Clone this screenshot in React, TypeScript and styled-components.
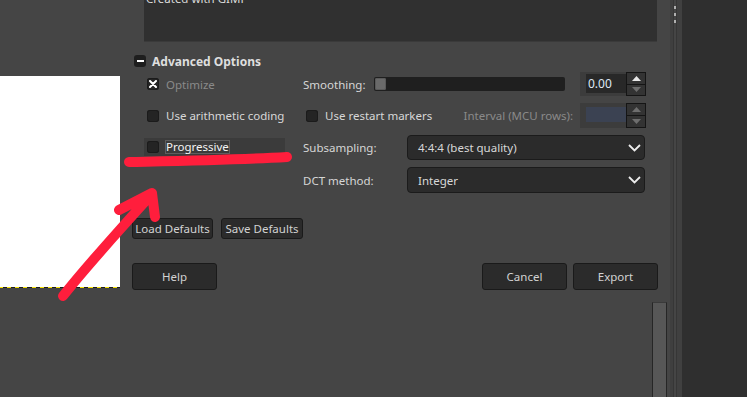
import React from 'react'
import styled, { createGlobalStyle } from 'styled-components'

const GlobalStyle = createGlobalStyle`
  html, body {
    margin: 0;
    padding: 0;
    background: #454545;
    overflow: hidden;
  }
  body {
    font-family: "Noto Sans", "Open Sans", sans-serif;
    font-size: 11.5px;
    color: #d6d6d6;
  }
`

function Check({ checked }: { checked?: boolean }) {
  return (
    <CheckBox>
      {checked && (
        <svg width="8" height="8" viewBox="0 0 8 8">
          <path d="M1 1 L7 7 M7 1 L1 7" stroke="#fff" strokeWidth="2" strokeLinecap="round" />
        </svg>
      )}
    </CheckBox>
  )
}

function Arrow({ up, dim }: { up?: boolean; dim?: boolean }) {
  return (
    <svg width="9" height="5" viewBox="0 0 9 5">
      <path d={up ? 'M0 5 L4.5 0 L9 5 Z' : 'M0 0 L4.5 5 L9 0 Z'} fill={dim ? '#6e6e6e' : '#e8e8e8'} />
    </svg>
  )
}

function Chevron() {
  return (
    <svg width="13" height="8" viewBox="0 0 13 8">
      <path d="M1 1 L6.5 6.5 L12 1" stroke="#ececec" strokeWidth="1.8" fill="none" />
    </svg>
  )
}

function Spin({ value, disabled, height }: { value?: string; disabled?: boolean; height: number }) {
  return (
    <SpinBox style={{ height }}>
      <SpinEntry $disabled={disabled}>{value}</SpinEntry>
      <SpinButtons>
        <SpinBtn>
          <Arrow up dim={disabled} />
        </SpinBtn>
        <SpinBtn>
          <Arrow dim />
        </SpinBtn>
      </SpinButtons>
    </SpinBox>
  )
}

export default function App() {
  return (
    <>
      <GlobalStyle />
      <Screen>
        <CanvasColumn>
          <Canvas />
        </CanvasColumn>

        <Dialog>
          <Comment>
            <CommentText>Created with GIMP</CommentText>
          </Comment>

          <Expander>
            <ExpanderBox>
              <span />
            </ExpanderBox>
            Advanced Options
          </Expander>

          <Options>
            <CheckItem $dim>
              <Check checked />
              Optimize
            </CheckItem>
            <RightRow>
              <Label>Smoothing:</Label>
              <Slider>
                <Handle />
              </Slider>
              <Spin value="0.00" height={24} />
            </RightRow>

            <CheckItem>
              <Check />
              Use arithmetic coding
            </CheckItem>
            <RightRow>
              <CheckItem>
                <Check />
                Use restart markers
              </CheckItem>
              <Spacer />
              <Label $dim>Interval (MCU rows):</Label>
              <Spin disabled height={25} />
            </RightRow>

            <CheckItem $focused>
              <Check />
              <FocusText>Progressive</FocusText>
            </CheckItem>
            <RightRow>
              <ComboLabel>Subsampling:</ComboLabel>
              <Combo>
                4:4:4 (best quality)
                <Chevron />
              </Combo>
            </RightRow>

            <span />
            <RightRow>
              <ComboLabel>DCT method:</ComboLabel>
              <Combo>
                Integer
                <Chevron />
              </Combo>
            </RightRow>
          </Options>

          <DefaultsRow>
            <Button $w={81} $h={21}>Load Defaults</Button>
            <Button $w={82} $h={21}>Save Defaults</Button>
          </DefaultsRow>

          <ActionRow>
            <Button $w={85} $h={27}>Help</Button>
            <Spacer />
            <Button $w={85} $h={27}>Cancel</Button>
            <Button $w={85} $h={27}>Export</Button>
          </ActionRow>

          <ScrollTrack />
        </Dialog>

        <Divider>
          <Grip />
          <Grip />
          <Grip />
        </Divider>
        <SidePanel />

        <Marks width="747" height="397" viewBox="0 0 747 397">
          <path
            d="M129 162 C 175 161, 235 160, 287 157"
            stroke="#ff1e3c"
            strokeWidth="10"
            strokeLinecap="round"
            fill="none"
          />
          <path
            d="M63 296 C 85 268, 112 238, 152 194 M119 210 L 152 193 L 155 217"
            stroke="#ff1e3c"
            strokeWidth="10"
            strokeLinecap="round"
            strokeLinejoin="round"
            fill="none"
          />
        </Marks>
      </Screen>
    </>
  )
}

const Screen = styled.div`
  position: relative;
  display: flex;
  width: 747px;
  height: 397px;
  overflow: hidden;
`

const CanvasColumn = styled.div`
  width: 120px;
  padding-top: 76px;
  flex-shrink: 0;
`

const Canvas = styled.div`
  height: 211px;
  background: #fff;
  border-bottom: 1px solid transparent;
  border-image: repeating-linear-gradient(90deg, #f5e100 0 4px, #1c1c1c 4px 8px) 1;
`

const Dialog = styled.div`
  width: 550px;
  flex-shrink: 0;
  display: flex;
  flex-direction: column;
  padding-left: 12px;
  box-sizing: border-box;
`

const Comment = styled.div`
  margin-left: 12px;
  width: 513px;
  height: 41px;
  background: #303030;
  overflow: hidden;
  box-shadow: 0 1px 0 #3a3a3a;
`

const CommentText = styled.div`
  margin-top: -7px;
  padding-left: 2px;
  line-height: 12px;
  color: #dcdcdc;
`

const Expander = styled.div`
  margin-top: 12px;
  margin-left: 2px;
  height: 16px;
  display: flex;
  align-items: center;
  gap: 6px;
  font-size: 12px;
  font-weight: bold;
  color: #dedede;
`

const ExpanderBox = styled.span`
  width: 12px;
  height: 12px;
  border-radius: 3px;
  background: #1e1e1e;
  display: flex;
  align-items: center;
  justify-content: center;

  span {
    width: 7px;
    height: 2px;
    background: #fff;
  }
`

const Options = styled.div`
  margin-top: 3px;
  margin-left: 12px;
  display: grid;
  grid-template-columns: 141px 343px;
  grid-template-rows: 24px 25px 25px 26px;
  column-gap: 18px;
  row-gap: 7px;
`

const CheckItem = styled.div<{ $dim?: boolean; $focused?: boolean }>`
  display: flex;
  align-items: center;
  gap: 7px;
  padding-left: 3px;
  white-space: nowrap;
  color: ${({ $dim }) => ($dim ? '#8a8a8a' : '#d8d8d8')};
  ${({ $focused }) =>
    $focused &&
    `
    align-self: center;
    height: 18px;
    margin-top: -2px;
    background: #3b3b3b;
    color: #f4f4f4;
  `}
`

const FocusText = styled.span`
  border: 1px solid #5e5e5e;
  line-height: 12px;
  margin-left: -1px;
`

const CheckBox = styled.span`
  width: 12px;
  height: 12px;
  border-radius: 3px;
  background: #242424;
  box-shadow: inset 0 0 0 1px #1b1b1b;
  display: flex;
  align-items: center;
  justify-content: center;
  flex-shrink: 0;
`

const RightRow = styled.div`
  display: flex;
  align-items: center;
`

const Label = styled.span<{ $dim?: boolean }>`
  color: ${({ $dim }) => ($dim ? '#8a8a8a' : '#d6d6d6')};
  white-space: nowrap;
`

const ComboLabel = styled(Label)`
  width: 104px;
`

const Spacer = styled.div`
  flex: 1;
`

const Slider = styled.div`
  margin-left: 9px;
  margin-right: 8px;
  flex: 1;
  height: 14px;
  background: #1f1f1f;
  border-radius: 2px;
  display: flex;
  align-items: center;
  padding-left: 1px;
`

const Handle = styled.span`
  width: 11px;
  height: 12px;
  border-radius: 2px;
  background: #6a6a6a;
  box-shadow: inset 0 0 0 1px #5a5a5a;
`

const SpinBox = styled.div`
  width: 66px;
  display: flex;
  background: #3c3c3c;
  margin-left: 7px;
  flex-shrink: 0;
`

const SpinEntry = styled.div<{ $disabled?: boolean }>`
  flex: 1;
  margin: 2px 0 3px 6px;
  padding-left: 2px;
  display: flex;
  align-items: center;
  font-size: 12px;
  color: #dfe8f4;
  background: ${({ $disabled }) => ($disabled ? '#3b4252' : '#282828')};
  ${({ $disabled }) => $disabled && 'margin: 4px 0 6px 6px;'}
`

const SpinButtons = styled.div`
  width: 20px;
  display: flex;
  flex-direction: column;
  border: 1px solid #151515;
  box-sizing: border-box;
`

const SpinBtn = styled.div`
  flex: 1;
  display: flex;
  align-items: center;
  justify-content: center;
  background: #333;
  & + & {
    border-top: 1px solid #151515;
  }
`

const Combo = styled.div`
  flex: 1;
  margin-right: 1px;
  align-self: stretch;
  display: flex;
  align-items: center;
  justify-content: space-between;
  padding: 0 3px 0 10px;
  background: #2b2b2b;
  border: 1px solid #1b1b1b;
  border-radius: 4px;
  color: #d8d8d8;
`

const DefaultsRow = styled.div`
  margin-top: 25px;
  display: flex;
  gap: 8px;
`

const ActionRow = styled.div`
  margin-top: 24px;
  width: 526px;
  display: flex;
  gap: 6px;
`

const Button = styled.div<{ $w: number; $h: number }>`
  width: ${({ $w }) => $w}px;
  height: ${({ $h }) => $h}px;
  box-sizing: border-box;
  display: flex;
  align-items: center;
  justify-content: center;
  background: #2b2b2b;
  border: 1px solid #1a1a1a;
  border-radius: 3px;
  color: #d2d2d2;
  white-space: nowrap;
`

const ScrollTrack = styled.div`
  margin-top: 12px;
  margin-left: auto;
  margin-right: 3px;
  width: 15px;
  flex: 1;
  box-sizing: border-box;
  background: #575757;
  border-left: 1px solid #262626;
  border-right: 1px solid #262626;
  border-top: 1px solid #3a3a3a;
`

const Divider = styled.div`
  width: 12px;
  flex-shrink: 0;
  box-sizing: border-box;
  padding: 6px 0 0 4px;
  display: flex;
  flex-direction: column;
  gap: 4px;
  background: linear-gradient(
    90deg,
    #3f3f3f 0 3px,
    #363636 3px 4px,
    #454545 4px 6px,
    #363636 6px 7px,
    #404040 7px
  );
`

const Grip = styled.span`
  width: 2px;
  height: 3px;
  background: #b0b0b0;
`

const SidePanel = styled.div`
  flex: 1;
  background: #2f2f2f;
`

const Marks = styled.svg`
  position: absolute;
  left: 0;
  top: 0;
  pointer-events: none;
`
